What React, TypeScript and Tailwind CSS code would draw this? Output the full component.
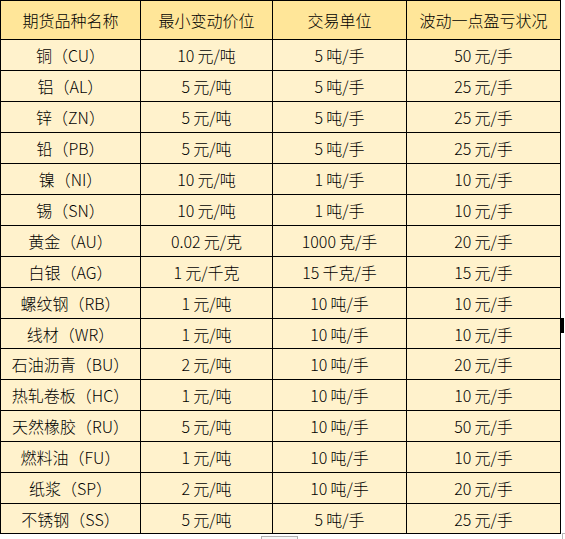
import React from "react";

const rows: [string, string, string, string][] = [
  ["铜（CU）", "10元/吨", "5吨/手", "50元/手"],
  ["铝（AL）", "5元/吨", "5吨/手", "25元/手"],
  ["锌（ZN）", "5元/吨", "5吨/手", "25元/手"],
  ["铅（PB）", "5元/吨", "5吨/手", "25元/手"],
  ["镍（NI）", "10元/吨", "1吨/手", "10元/手"],
  ["锡（SN）", "10元/吨", "1吨/手", "10元/手"],
  ["黄金（AU）", "0.02元/克", "1000克/手", "20元/手"],
  ["白银（AG）", "1元/千克", "15千克/手", "15元/手"],
  ["螺纹钢（RB）", "1元/吨", "10吨/手", "10元/手"],
  ["线材（WR）", "1元/吨", "10吨/手", "10元/手"],
  ["石油沥青（BU）", "2元/吨", "10吨/手", "20元/手"],
  ["热轧卷板（HC）", "1元/吨", "10吨/手", "10元/手"],
  ["天然橡胶（RU）", "5元/吨", "10吨/手", "50元/手"],
  ["燃料油（FU）", "1元/吨", "10吨/手", "10元/手"],
  ["纸浆（SP）", "2元/吨", "10吨/手", "20元/手"],
  ["不锈钢（SS）", "5元/吨", "5吨/手", "25元/手"],
];

const header = ["期货品种名称", "最小变动价位", "交易单位", "波动一点盈亏状况"];

function Val({ text }: { text: string }) {
  const m = text.match(/^([\d.]+)(.*)$/);
  if (!m) return <>{text}</>;
  return (
    <>
      <span className="mr-[3px]">{m[1]}</span>
      <span>{m[2]}</span>
    </>
  );
}

function Row({ cells, head, short }: { cells: string[]; head?: boolean; short?: boolean }) {
  const h = head ? "h-[39px]" : short ? "h-[30px]" : "h-[31px]";
  const bg = head ? "bg-[#ffe699]" : "bg-[#fff2cc]";
  const cell = "border-r border-b border-black flex items-center justify-center";
  return (
    <div className={`flex ${h} ${bg}`}>
      <div className={`w-[140px] ${cell}`}>{cells[0]}</div>
      <div className={`w-[132px] ${cell}`}>{head ? cells[1] : <Val text={cells[1]} />}</div>
      <div className={`w-[134px] ${cell}`}>{head ? cells[2] : <Val text={cells[2]} />}</div>
      <div className={`w-[154px] ${cell}`}>{head ? cells[3] : <Val text={cells[3]} />}</div>
    </div>
  );
}

export default function App() {
  return (
    <div className="relative w-[565px] h-[539px] bg-white overflow-hidden">
      <div
        className="w-[561px] border-l border-t border-black text-black text-[16px] font-light leading-none"
        style={{ fontFamily: '"Noto Sans CJK SC", "Noto Sans", sans-serif' }}
      >
        <Row cells={header} head />
        {rows.map((r, i) => (
          <Row key={i} cells={r} short={i === 9 || i === 15} />
        ))}
      </div>
      <div className="absolute left-[561px] top-[318px] w-[3px] h-[15px] bg-black" />
      <div className="absolute left-[261px] top-[536px] w-[37px] h-[6px] border border-[#b0b0b0] bg-[#f7f7f7]" />
      <div className="absolute left-[562px] top-[533px] w-[4px] h-[8px] border-l border-t border-[#b8b8b8]" />
    </div>
  );
}
